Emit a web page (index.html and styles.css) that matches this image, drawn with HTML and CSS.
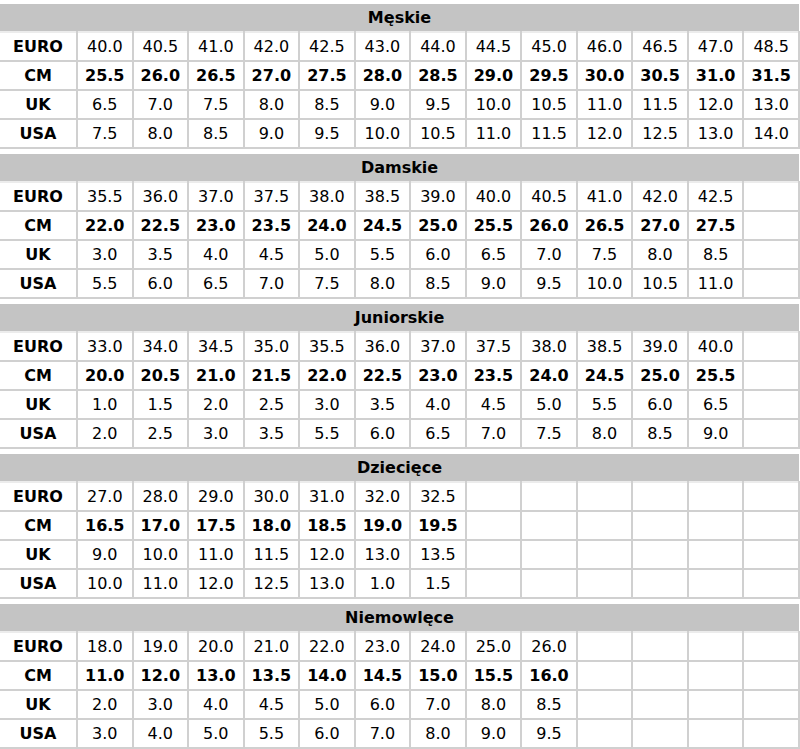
FILE: index.html
```html
<!DOCTYPE html>
<html lang="pl">
<head>
<meta charset="utf-8">
<title>Tabela rozmiarów</title>
<link rel="stylesheet" href="styles.css">
</head>
<body>
<div class="sizes">
<table class="size-table">
<colgroup><col class="label-col"><col span="13"></colgroup>
<thead><tr><th colspan="14">Męskie</th></tr></thead>
<tbody>
<tr><td class="label">EURO</td><td>40.0</td><td>40.5</td><td>41.0</td><td>42.0</td><td>42.5</td><td>43.0</td><td>44.0</td><td>44.5</td><td>45.0</td><td>46.0</td><td>46.5</td><td>47.0</td><td>48.5</td></tr>
<tr class="cm"><td class="label">CM</td><td>25.5</td><td>26.0</td><td>26.5</td><td>27.0</td><td>27.5</td><td>28.0</td><td>28.5</td><td>29.0</td><td>29.5</td><td>30.0</td><td>30.5</td><td>31.0</td><td>31.5</td></tr>
<tr><td class="label">UK</td><td>6.5</td><td>7.0</td><td>7.5</td><td>8.0</td><td>8.5</td><td>9.0</td><td>9.5</td><td>10.0</td><td>10.5</td><td>11.0</td><td>11.5</td><td>12.0</td><td>13.0</td></tr>
<tr><td class="label">USA</td><td>7.5</td><td>8.0</td><td>8.5</td><td>9.0</td><td>9.5</td><td>10.0</td><td>10.5</td><td>11.0</td><td>11.5</td><td>12.0</td><td>12.5</td><td>13.0</td><td>14.0</td></tr>
</tbody>
</table>

<table class="size-table">
<colgroup><col class="label-col"><col span="13"></colgroup>
<thead><tr><th colspan="14">Damskie</th></tr></thead>
<tbody>
<tr><td class="label">EURO</td><td>35.5</td><td>36.0</td><td>37.0</td><td>37.5</td><td>38.0</td><td>38.5</td><td>39.0</td><td>40.0</td><td>40.5</td><td>41.0</td><td>42.0</td><td>42.5</td><td></td></tr>
<tr class="cm"><td class="label">CM</td><td>22.0</td><td>22.5</td><td>23.0</td><td>23.5</td><td>24.0</td><td>24.5</td><td>25.0</td><td>25.5</td><td>26.0</td><td>26.5</td><td>27.0</td><td>27.5</td><td></td></tr>
<tr><td class="label">UK</td><td>3.0</td><td>3.5</td><td>4.0</td><td>4.5</td><td>5.0</td><td>5.5</td><td>6.0</td><td>6.5</td><td>7.0</td><td>7.5</td><td>8.0</td><td>8.5</td><td></td></tr>
<tr><td class="label">USA</td><td>5.5</td><td>6.0</td><td>6.5</td><td>7.0</td><td>7.5</td><td>8.0</td><td>8.5</td><td>9.0</td><td>9.5</td><td>10.0</td><td>10.5</td><td>11.0</td><td></td></tr>
</tbody>
</table>

<table class="size-table">
<colgroup><col class="label-col"><col span="13"></colgroup>
<thead><tr><th colspan="14">Juniorskie</th></tr></thead>
<tbody>
<tr><td class="label">EURO</td><td>33.0</td><td>34.0</td><td>34.5</td><td>35.0</td><td>35.5</td><td>36.0</td><td>37.0</td><td>37.5</td><td>38.0</td><td>38.5</td><td>39.0</td><td>40.0</td><td></td></tr>
<tr class="cm"><td class="label">CM</td><td>20.0</td><td>20.5</td><td>21.0</td><td>21.5</td><td>22.0</td><td>22.5</td><td>23.0</td><td>23.5</td><td>24.0</td><td>24.5</td><td>25.0</td><td>25.5</td><td></td></tr>
<tr><td class="label">UK</td><td>1.0</td><td>1.5</td><td>2.0</td><td>2.5</td><td>3.0</td><td>3.5</td><td>4.0</td><td>4.5</td><td>5.0</td><td>5.5</td><td>6.0</td><td>6.5</td><td></td></tr>
<tr><td class="label">USA</td><td>2.0</td><td>2.5</td><td>3.0</td><td>3.5</td><td>5.5</td><td>6.0</td><td>6.5</td><td>7.0</td><td>7.5</td><td>8.0</td><td>8.5</td><td>9.0</td><td></td></tr>
</tbody>
</table>

<table class="size-table">
<colgroup><col class="label-col"><col span="13"></colgroup>
<thead><tr><th colspan="14">Dziecięce</th></tr></thead>
<tbody>
<tr><td class="label">EURO</td><td>27.0</td><td>28.0</td><td>29.0</td><td>30.0</td><td>31.0</td><td>32.0</td><td>32.5</td><td></td><td></td><td></td><td></td><td></td><td></td></tr>
<tr class="cm"><td class="label">CM</td><td>16.5</td><td>17.0</td><td>17.5</td><td>18.0</td><td>18.5</td><td>19.0</td><td>19.5</td><td></td><td></td><td></td><td></td><td></td><td></td></tr>
<tr><td class="label">UK</td><td>9.0</td><td>10.0</td><td>11.0</td><td>11.5</td><td>12.0</td><td>13.0</td><td>13.5</td><td></td><td></td><td></td><td></td><td></td><td></td></tr>
<tr><td class="label">USA</td><td>10.0</td><td>11.0</td><td>12.0</td><td>12.5</td><td>13.0</td><td>1.0</td><td>1.5</td><td></td><td></td><td></td><td></td><td></td><td></td></tr>
</tbody>
</table>

<table class="size-table">
<colgroup><col class="label-col"><col span="13"></colgroup>
<thead><tr><th colspan="14">Niemowlęce</th></tr></thead>
<tbody>
<tr><td class="label">EURO</td><td>18.0</td><td>19.0</td><td>20.0</td><td>21.0</td><td>22.0</td><td>23.0</td><td>24.0</td><td>25.0</td><td>26.0</td><td></td><td></td><td></td><td></td></tr>
<tr class="cm"><td class="label">CM</td><td>11.0</td><td>12.0</td><td>13.0</td><td>13.5</td><td>14.0</td><td>14.5</td><td>15.0</td><td>15.5</td><td>16.0</td><td></td><td></td><td></td><td></td></tr>
<tr><td class="label">UK</td><td>2.0</td><td>3.0</td><td>4.0</td><td>4.5</td><td>5.0</td><td>6.0</td><td>7.0</td><td>8.0</td><td>8.5</td><td></td><td></td><td></td><td></td></tr>
<tr><td class="label">USA</td><td>3.0</td><td>4.0</td><td>5.0</td><td>5.5</td><td>6.0</td><td>7.0</td><td>8.0</td><td>9.0</td><td>9.5</td><td></td><td></td><td></td><td></td></tr>
</tbody>
</table>
</div>
</body>
</html>
```

FILE: styles.css
```css
html, body {
  margin: 0;
  padding: 0;
  background: #ffffff;
}

body {
  font-family: "DejaVu Sans", Verdana, sans-serif;
  font-size: 16px;
  color: #000000;
}

.sizes {
  display: flex;
  flex-direction: column;
  gap: 5px;
  padding-top: 4px;
}

.size-table {
  width: 800px;
  table-layout: fixed;
  border-collapse: collapse;
}

.label-col {
  width: 77px;
}

.size-table th {
  height: 27px;
  padding: 0;
  background: #c4c4c4;
  font-weight: bold;
  text-align: center;
  vertical-align: middle;
  border: none;
}

.size-table td {
  height: 27px;
  padding: 0;
  text-align: center;
  vertical-align: middle;
  border: 2px solid #d0d0d0;
  white-space: nowrap;
}

.size-table tbody tr:first-child td {
  border-top-color: #ececec;
}

.size-table td.label {
  border-left: none;
  font-weight: bold;
}

.size-table .cm td {
  font-weight: bold;
}
```
